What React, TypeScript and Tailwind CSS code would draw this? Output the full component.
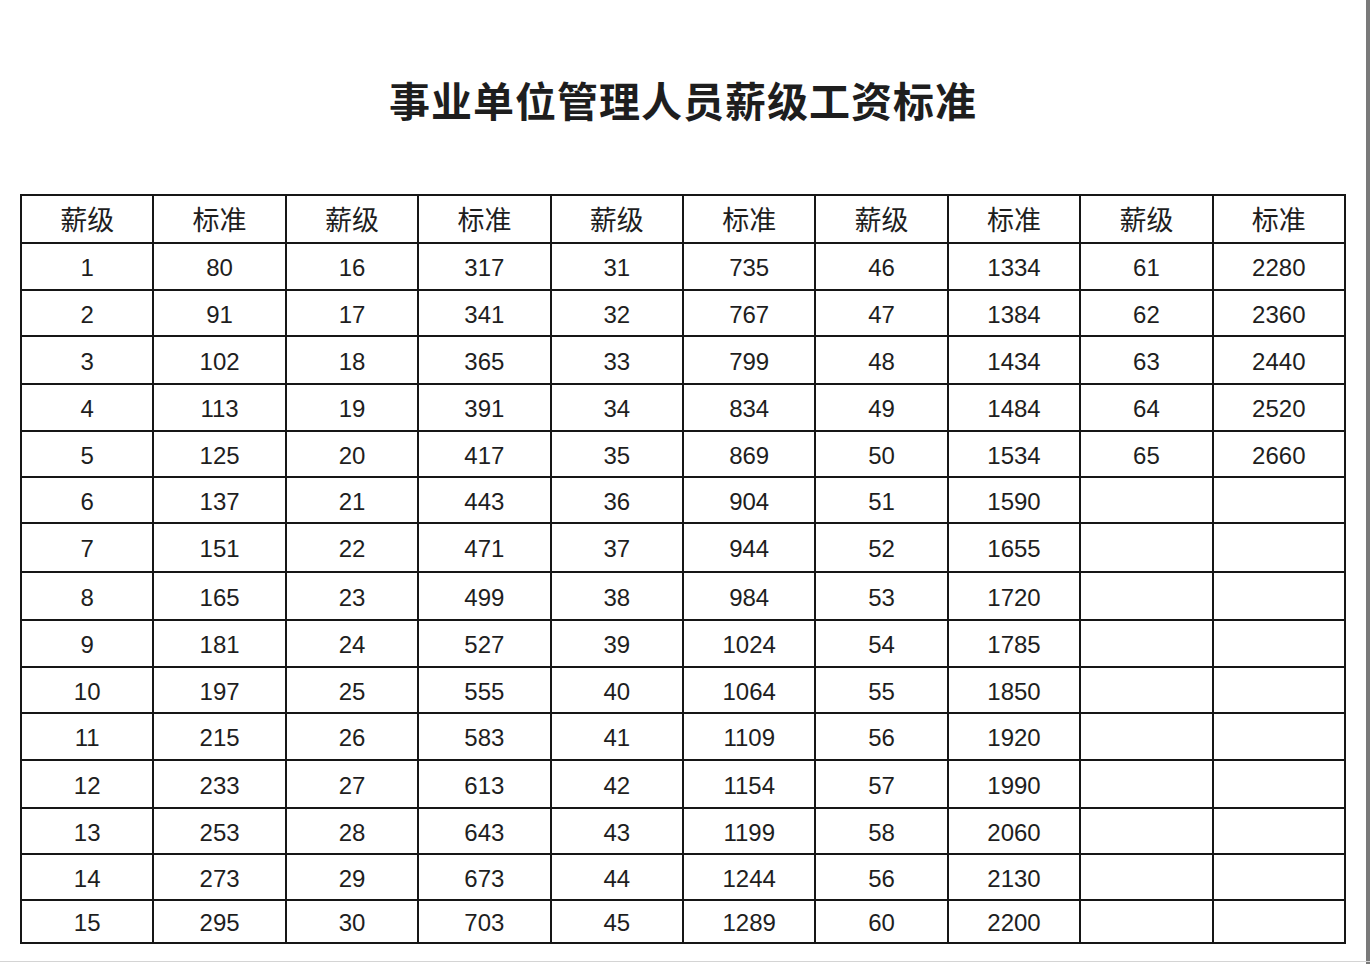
const values = [
	[80, 91, 102, 113, 125, 137, 151, 165, 181, 197, 215, 233, 253, 273, 295],
	[317, 341, 365, 391, 417, 443, 471, 499, 527, 555, 583, 613, 643, 673, 703],
	[735, 767, 799, 834, 869, 904, 944, 984, 1024, 1064, 1109, 1154, 1199, 1244, 1289],
	[1334, 1384, 1434, 1484, 1534, 1590, 1655, 1720, 1785, 1850, 1920, 1990, 2060, 2130, 2200],
	[2280, 2360, 2440, 2520, 2660]
];

// grade numbers as printed (the sheet has "56" on the 59 row)
const grades = [
	Array.from({ length: 15 }, (_, i) => i + 1),
	Array.from({ length: 15 }, (_, i) => i + 16),
	Array.from({ length: 15 }, (_, i) => i + 31),
	[46, 47, 48, 49, 50, 51, 52, 53, 54, 55, 56, 57, 58, 56, 60],
	[61, 62, 63, 64, 65]
];

const cjk = { fontFamily: '"Noto Sans CJK SC", "Liberation Sans", sans-serif' };
const num = { fontFamily: '"Liberation Sans", Arial, sans-serif' };

export default function App() {
	const rows = Array.from({ length: 15 }, (_, r) => r);

	return (
		<div className="relative h-[964px] w-[1370px] overflow-hidden bg-white text-[#1e1e1e]">
			<div className="absolute right-0 top-0 h-full w-[4px] bg-[#7a7a7a]" />
			<div className="absolute bottom-[2px] left-0 h-px w-full bg-[#d4d4d4]" />

			<div className="ml-[20px] w-[1326px]">
				<h1
					className="pt-[79px] text-center text-[41px] font-bold leading-none tracking-[1px]"
					style={cjk}
				>
					事业单位管理人员薪级工资标准
				</h1>

				<div className="mt-[74px] grid grid-cols-10 grid-rows-[46px_45px_44px_46px_45px_44px_44px_47px_46px_45px_44px_45px_46px_44px_44px_41px] gap-[2px] bg-[#161616] p-[2px]">
					{Array.from({ length: 5 }).map((_, g) => (
						<>
							<div key={`hg${g}`} className="flex items-center justify-center bg-white text-[27px]" style={cjk}>
								薪级
							</div>
							<div key={`hv${g}`} className="flex items-center justify-center bg-white text-[27px]" style={cjk}>
								标准
							</div>
						</>
					))}
					{rows.map((r) =>
						Array.from({ length: 5 }).map((_, g) => (
							<>
								<div key={`g${r}-${g}`} className="flex items-center justify-center bg-white pt-[3px] text-[24px]" style={num}>
									{grades[g][r] ?? ''}
								</div>
								<div key={`v${r}-${g}`} className="flex items-center justify-center bg-white pt-[3px] text-[24px]" style={num}>
									{values[g][r] ?? ''}
								</div>
							</>
						))
					)}
				</div>
			</div>
		</div>
	);
}
